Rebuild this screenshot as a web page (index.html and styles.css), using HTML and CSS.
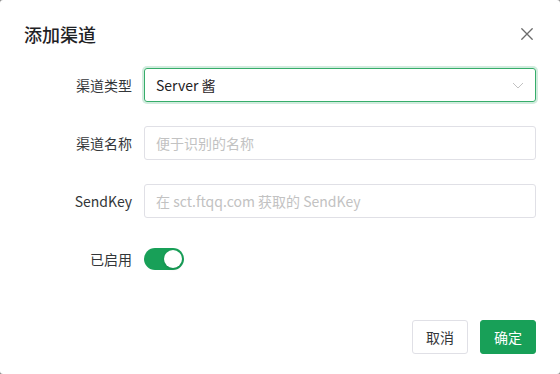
FILE: index.html
```html
<!DOCTYPE html>
<html lang="zh">
<head>
<meta charset="utf-8">
<link rel="stylesheet" href="styles.css">
</head>
<body>
<div class="modal">
  <div class="header">
    <div class="title">添加渠道</div>
    <button class="close" aria-label="close">
      <svg width="12" height="12" viewBox="0 0 12 12"><path d="M0.8 0.8 L11.2 11.2 M11.2 0.8 L0.8 11.2" stroke="#6b6b6b" stroke-width="1.3" fill="none" stroke-linecap="round"/></svg>
    </button>
  </div>
  <div class="body">
    <div class="row">
      <label class="label">渠道类型</label>
      <div class="control select focused">
        <span class="value">Server 酱</span>
        <svg class="arrow" width="12" height="7" viewBox="0 0 12 7"><path d="M1 1 L6 6 L11 1" stroke="#c2c2c2" stroke-width="1" fill="none"/></svg>
      </div>
    </div>
    <div class="row">
      <label class="label">渠道名称</label>
      <div class="control"><span class="placeholder">便于识别的名称</span></div>
    </div>
    <div class="row">
      <label class="label">SendKey</label>
      <div class="control"><span class="placeholder">在 sct.ftqq.com 获取的 SendKey</span></div>
    </div>
    <div class="row">
      <label class="label">已启用</label>
      <div class="switch"><span class="knob"></span></div>
    </div>
  </div>
  <div class="footer">
    <button class="btn">取消</button>
    <button class="btn primary">确定</button>
  </div>
</div>
</body>
</html>
```
FILE: styles.css
```css
* { box-sizing: border-box; }
html, body { margin: 0; padding: 0; }
body {
  width: 560px;
  height: 374px;
  background: #8a8a8a;
  font-family: "Noto Sans CJK SC", "Noto Sans", sans-serif;
  font-size: 14px;
  color: rgb(51, 54, 57);
}
.modal {
  width: 560px;
  height: 374px;
  background: #fff;
  border-radius: 3px;
  display: flex;
  flex-direction: column;
}
.header {
  display: flex;
  align-items: center;
  justify-content: space-between;
  padding: 20px 24px 0 24px;
  height: 48px;
}
.title {
  font-size: 18px;
  font-weight: 500;
  line-height: 28px;
  color: rgb(31, 34, 37);
}
.close {
  border: 0;
  background: none;
  padding: 0;
  width: 12px;
  height: 12px;
  margin-right: 3px;
  display: flex;
}
.body {
  padding: 20px 24px 0 24px;
  display: flex;
  flex-direction: column;
}
.row {
  display: flex;
  align-items: center;
  height: 34px;
  margin-bottom: 24px;
}
.label {
  width: 120px;
  padding-right: 12px;
  text-align: right;
  line-height: 34px;
  color: rgb(51, 54, 57);
}
.control {
  flex: 1;
  height: 34px;
  border: 1px solid rgb(224, 224, 230);
  border-radius: 3px;
  padding: 0 11px;
  display: flex;
  align-items: center;
  line-height: 20px;
}
.select.focused {
  border-color: #36ad6a;
  box-shadow: 0 0 0 2px rgba(24, 160, 88, 0.2);
}
.value { flex: 1; color: rgb(31, 34, 37); }
.placeholder { color: rgb(194, 194, 194); }
.switch {
  width: 40px;
  height: 22px;
  border-radius: 11px;
  background: #18a058;
  display: flex;
  align-items: center;
  justify-content: flex-end;
  padding-right: 2px;
}
.knob {
  width: 18px;
  height: 18px;
  border-radius: 50%;
  background: #fff;
  box-shadow: 0 1px 3px rgba(0, 0, 0, 0.15);
}
.footer {
  margin-top: auto;
  display: flex;
  justify-content: flex-end;
  gap: 12px;
  padding: 0 24px 20px 24px;
}
.btn {
  height: 34px;
  padding: 0 13px;
  border: 1px solid rgb(224, 224, 230);
  border-radius: 3px;
  background: #fff;
  font-family: inherit;
  font-size: 14px;
  color: rgb(51, 54, 57);
  line-height: 20px;
}
.btn.primary {
  background: #18a058;
  border-color: #18a058;
  color: #fff;
}
```
